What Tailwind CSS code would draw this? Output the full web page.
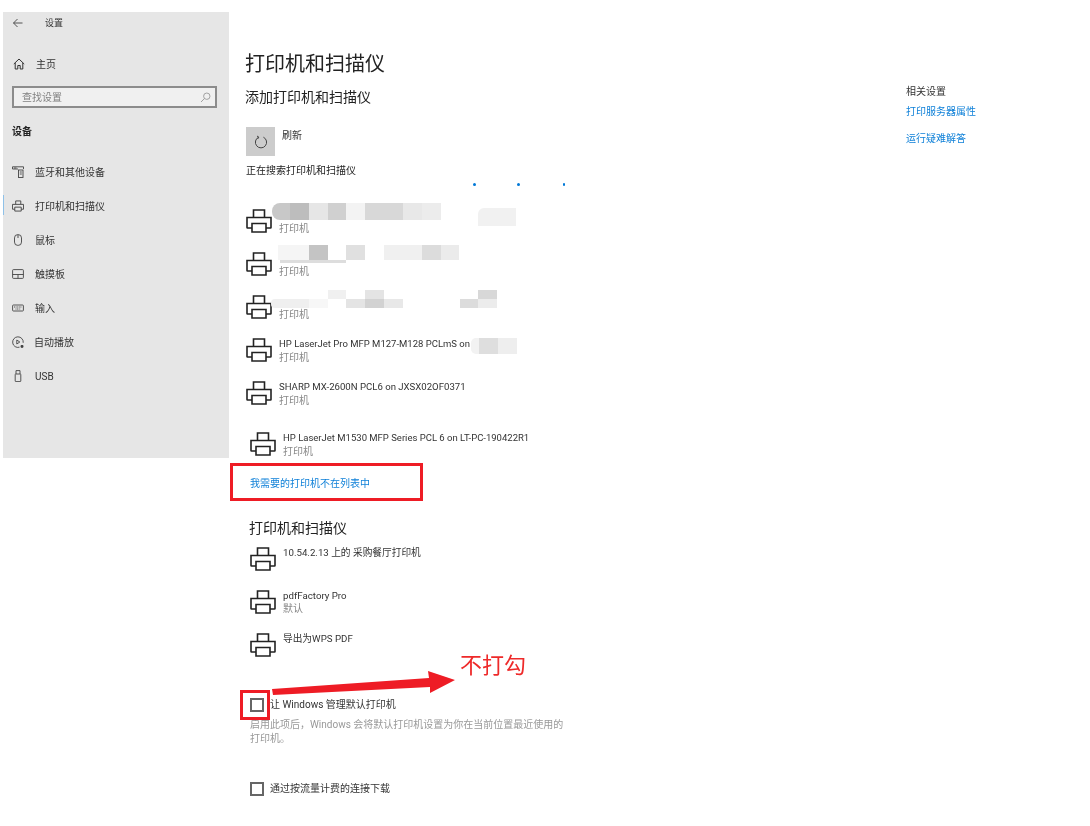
<!DOCTYPE html>
<html lang="zh-CN">
<head>
  <meta charset="UTF-8" />
  <title>打印机和扫描仪</title>
  <script src="https://cdn.jsdelivr.net/npm/@tailwindcss/browser@4"></script>
</head>
<body class="bg-white">
<div class="relative w-[1090px] h-[826px] overflow-hidden flex items-start bg-white text-[10px] leading-[14px] text-[#333] blur-[0.45px] [font-family:'Roboto','Noto_Sans_CJK_SC',sans-serif]">

  <!-- sidebar -->
  <aside class="relative ml-[3px] mt-[12px] w-[226px] h-[446px] shrink-0 bg-[#e6e6e6]">
    <div class="h-[22px] flex items-center">
      <svg class="ml-[10px] w-[10px] h-[10px]" viewBox="0 0 10 10" fill="none" stroke="#444" stroke-width="0.9"><path d="M0.5 5H9.5M4.5 1L0.5 5L4.5 9"/></svg>
      <span class="ml-[22px] text-[9px]">设置</span>
    </div>
    <div class="mt-[20px] h-[20px] flex items-center">
      <svg class="ml-[10px] w-[12px] h-[12px]" viewBox="0 0 12 12" fill="none" stroke="#333" stroke-width="1"><path d="M0.8 6L6 1L11.2 6M2.2 5V11H4.8V7.5H7.2V11H9.8V5"/></svg>
      <span class="ml-[11px] mt-[2px]">主页</span>
    </div>
    <div class="mt-[12px] ml-[9px] w-[205px] h-[22px] border-2 border-[#8c8c8c] bg-[#f0f0f0] flex items-center justify-between pl-[8px] pr-[4px] text-[#808080]">
      <span class="mt-[2px]">查找设置</span>
      <svg class="w-[11px] h-[11px]" viewBox="0 0 11 11" fill="none" stroke="#999" stroke-width="0.9"><circle cx="6.8" cy="4.2" r="3.2"/><path d="M4.5 6.5L1 10"/></svg>
    </div>
    <div class="mt-[17px] ml-[9px] font-bold text-[#222]">设备</div>
    <nav class="mt-[16px]">
      <div class="h-[34px] flex items-center">
        <svg class="ml-[9px] w-[12px] h-[12px]" viewBox="0 0 12 12" fill="none" stroke="#444" stroke-width="0.9"><path d="M6 3H0.5V0.8H11.5V3M2 2H4.5"/><rect x="6.5" y="4" width="4.5" height="7.5"/><path d="M7.8 6H9.8M7.8 8H9.8"/></svg>
        <span class="ml-[11px] mt-[2px]">蓝牙和其他设备</span>
      </div>
      <div class="relative h-[34px] flex items-center">
        <span class="absolute left-0 top-[6px] w-[1px] h-[20px] bg-[#8fc1e8]"></span>
        <svg class="ml-[9px] w-[12px] h-[12px]" viewBox="0 0 26 24" fill="none" stroke="#444" stroke-width="2"><path d="M8 8V1H19V8M6 19H1V8.5H25V19H20M6 14.5H20V23H6Z"/></svg>
        <span class="ml-[11px] mt-[2px]">打印机和扫描仪</span>
      </div>
      <div class="h-[34px] flex items-center">
        <svg class="ml-[9px] w-[12px] h-[12px]" viewBox="0 0 12 12" fill="none" stroke="#444" stroke-width="0.9"><rect x="2.5" y="0.6" width="7" height="10.8" rx="3.3"/><path d="M6 0.8V4"/></svg>
        <span class="ml-[11px] mt-[2px]">鼠标</span>
      </div>
      <div class="h-[34px] flex items-center">
        <svg class="ml-[9px] w-[12px] h-[12px]" viewBox="0 0 12 12" fill="none" stroke="#444" stroke-width="0.9"><rect x="0.6" y="1.6" width="10.8" height="8.8" rx="0.8"/><path d="M0.6 6.5H11.4M6 6.5V10.4"/></svg>
        <span class="ml-[11px] mt-[2px]">触摸板</span>
      </div>
      <div class="h-[34px] flex items-center">
        <svg class="ml-[9px] w-[12px] h-[12px]" viewBox="0 0 12 12" fill="none" stroke="#444" stroke-width="0.9"><rect x="0.6" y="3" width="10.8" height="6" rx="0.8"/><path d="M2 5H10M3.5 7H8.5" stroke-dasharray="1 0.6"/></svg>
        <span class="ml-[11px] mt-[2px]">输入</span>
      </div>
      <div class="h-[34px] flex items-center">
        <svg class="ml-[9px] w-[12px] h-[12px]" viewBox="0 0 12 12" fill="none" stroke="#444" stroke-width="0.9"><path d="M7.5 11.2A5.3 5.3 0 1 1 11.2 6.8"/><path d="M4.8 4V8L7.8 6Z"/><path d="M9 9.5H11V11.3H9Z" fill="#444"/></svg>
        <span class="ml-[10px] mt-[2px]">自动播放</span>
      </div>
      <div class="h-[34px] flex items-center">
        <svg class="ml-[9px] w-[12px] h-[12px]" viewBox="0 0 12 12" fill="none" stroke="#444" stroke-width="0.9"><rect x="3.2" y="4" width="5.6" height="7.6" rx="0.6"/><path d="M4 4V0.6H8V4"/></svg>
        <span class="ml-[11px] mt-[2px]">USB</span>
      </div>
    </nav>
  </aside>

  <!-- main column -->
  <main class="ml-[17px] w-[660px] shrink-0 pt-[50px]">
    <h1 class="-ml-[1px] text-[20px] leading-[28px] text-[#222]">打印机和扫描仪</h1>
    <h2 class="-ml-[1px] mt-[9px] text-[14px] leading-[20px] text-[#222]">添加打印机和扫描仪</h2>
    <div class="mt-[20px] flex items-start">
      <div class="w-[29px] h-[29px] bg-[#cccccc] flex items-center justify-center">
        <svg class="w-[14px] h-[14px]" viewBox="0 0 14 14" fill="none" stroke="#444" stroke-width="1"><path d="M4.6 2.2A5.6 5.6 0 1 0 9.4 2.2M3 1L4.8 2.2L3.6 4"/></svg>
      </div>
      <span class="ml-[7px] mt-[2px]">刷新</span>
    </div>
    <p class="mt-[8px] text-[#222]">正在搜索打印机和扫描仪</p>
    <div class="mt-[5px] h-[3px] pl-[227px] flex items-center">
      <span class="w-[3px] h-[3px] rounded-full bg-[#0078d7]"></span>
      <span class="ml-[41px] w-[3px] h-[3px] rounded-full bg-[#0078d7]"></span>
      <span class="ml-[43px] w-[2px] h-[3px] rounded-full bg-[#0078d7]"></span>
    </div>

    <!-- found printers -->
    <div class="mt-[22px]">
      <div class="h-[43px] flex items-start">
        <svg class="mt-[1px] w-[26px] h-[24px] shrink-0" viewBox="0 0 26 24" fill="none" stroke="#222" stroke-width="1.6"><path d="M7.5 8V1H18.5V8M6 19H1.5Q1 19 1 18.5V8.5H25V18.5Q25 19 24.5 19H20M6 14.5H20V23H6Z"/></svg>
        <div class="relative ml-[7px]">
          <div class="h-[14px]"></div>
          <div class="text-[#888]">打印机</div>
          <!-- mosaic over the hidden name -->
          <div class="absolute left-[-7px] top-[-5px] flex">
            <div class="w-[18px] h-[17px] bg-[#c8c8c8] rounded-l-[8px]"></div>
            <div class="w-[19px] h-[17px] bg-[#bdbdbd]"></div>
            <div class="w-[19px] h-[17px] bg-[#e6e6e6]"></div>
            <div class="w-[18px] h-[17px] bg-[#d0d0d0]"></div>
            <div class="w-[19px] h-[17px] bg-[#f3f3f3]"></div>
            <div class="w-[38px] h-[17px] bg-[#d8d8d8]"></div>
            <div class="w-[19px] h-[17px] bg-[#e8e8e8]"></div>
            <div class="w-[19px] h-[17px] bg-[#ececec]"></div>
            <div class="ml-[37px] w-[38px] h-[18px] bg-[#f1f1f1] mt-[5px] rounded-tl-[6px]"></div>
          </div>
        </div>
      </div>
      <div class="h-[43px] flex items-start">
        <svg class="mt-[1px] w-[26px] h-[24px] shrink-0" viewBox="0 0 26 24" fill="none" stroke="#222" stroke-width="1.6"><path d="M7.5 8V1H18.5V8M6 19H1.5Q1 19 1 18.5V8.5H25V18.5Q25 19 24.5 19H20M6 14.5H20V23H6Z"/></svg>
        <div class="relative ml-[7px]">
          <div class="h-[14px]"></div>
          <div class="text-[#888]">打印机</div>
          <div class="absolute left-[-1px] top-[-6px] flex">
            <div class="w-[31px] h-[15px] bg-[#f5f5f5]"></div>
            <div class="w-[19px] h-[15px] bg-[#c4c4c4]"></div>
            <div class="w-[18px] h-[15px] bg-white"></div>
            <div class="w-[19px] h-[15px] bg-[#e0e0e0]"></div>
            <div class="w-[19px] h-[15px] bg-white"></div>
            <div class="w-[38px] h-[15px] bg-[#f0f0f0]"></div>
            <div class="w-[19px] h-[15px] bg-[#dcdcdc]"></div>
            <div class="w-[18px] h-[15px] bg-[#ebebeb]"></div>
          </div>
          <div class="absolute left-[1px] top-[9px] w-[66px] h-[3px] bg-[#dddddd]"></div>
        </div>
      </div>
      <div class="h-[43px] flex items-start">
        <svg class="mt-[1px] w-[26px] h-[24px] shrink-0" viewBox="0 0 26 24" fill="none" stroke="#222" stroke-width="1.6"><path d="M7.5 8V1H18.5V8M6 19H1.5Q1 19 1 18.5V8.5H25V18.5Q25 19 24.5 19H20M6 14.5H20V23H6Z"/></svg>
        <div class="relative ml-[7px]">
          <div class="h-[14px]"></div>
          <div class="text-[#888]">打印机</div>
          <div class="absolute left-[49px] top-[-4px] flex">
            <div class="w-[18px] h-[9px] bg-[#f0f0f0]"></div>
            <div class="ml-[19px] w-[19px] h-[9px] bg-[#e4e4e4]"></div>
            <div class="ml-[94px] w-[19px] h-[9px] bg-[#d8d8d8]"></div>
          </div>
          <div class="absolute left-[-8px] top-[5px] flex">
            <div class="w-[38px] h-[9px] bg-[#efefef] rounded-l-[4px]"></div>
            <div class="w-[19px] h-[9px] bg-[#f7f7f7]"></div>
            <div class="ml-[18px] w-[19px] h-[9px] bg-[#e4e4e4]"></div>
            <div class="w-[19px] h-[9px] bg-[#d2d2d2]"></div>
            <div class="w-[19px] h-[9px] bg-[#e8e8e8]"></div>
            <div class="ml-[57px] w-[18px] h-[9px] bg-[#dcdcdc]"></div>
            <div class="w-[19px] h-[9px] bg-[#ececec]"></div>
          </div>
        </div>
      </div>
      <div class="h-[43px] flex items-start">
        <svg class="mt-[1px] w-[26px] h-[24px] shrink-0" viewBox="0 0 26 24" fill="none" stroke="#222" stroke-width="1.6"><path d="M7.5 8V1H18.5V8M6 19H1.5Q1 19 1 18.5V8.5H25V18.5Q25 19 24.5 19H20M6 14.5H20V23H6Z"/></svg>
        <div class="ml-[7px]">
          <div class="flex h-[14px]">
            <span class="text-[9.5px]">HP LaserJet Pro MFP M127-M128 PCLmS on</span>
            <div class="flex h-[16px] mt-[1px] ml-[1px]">
              <div class="w-[8px] bg-[#f2f2f2] rounded-l-[5px]"></div>
              <div class="w-[19px] bg-[#dedede]"></div>
              <div class="w-[19px] bg-[#eeeeee]"></div>
            </div>
          </div>
          <div class="text-[#888]">打印机</div>
        </div>
      </div>
      <div class="h-[43px] flex items-start">
        <svg class="mt-[1px] w-[26px] h-[24px] shrink-0" viewBox="0 0 26 24" fill="none" stroke="#222" stroke-width="1.6"><path d="M7.5 8V1H18.5V8M6 19H1.5Q1 19 1 18.5V8.5H25V18.5Q25 19 24.5 19H20M6 14.5H20V23H6Z"/></svg>
        <div class="ml-[7px]">
          <div class="h-[14px] text-[9.6px]">SHARP MX-2600N PCL6 on JXSX02OF0371</div>
          <div class="text-[#888]">打印机</div>
        </div>
      </div>
    </div>

    <div class="pl-[4px]">
      <div class="mt-[8px] h-[43px] flex items-start">
        <svg class="mt-[1px] w-[26px] h-[24px] shrink-0" viewBox="0 0 26 24" fill="none" stroke="#222" stroke-width="1.6"><path d="M7.5 8V1H18.5V8M6 19H1.5Q1 19 1 18.5V8.5H25V18.5Q25 19 24.5 19H20M6 14.5H20V23H6Z"/></svg>
        <div class="ml-[7px]">
          <div class="text-[9.5px]">HP LaserJet M1530 MFP Series PCL 6 on LT-PC-190422R1</div>
          <div class="text-[#888]">打印机</div>
        </div>
      </div>
      <a class="block mt-[3px] text-[#0f80d8]">我需要的打印机不在列表中</a>

      <h2 class="-ml-[1px] mt-[27px] text-[14px] leading-[20px] text-[#222]">打印机和扫描仪</h2>
      <div class="mt-[8px]">
        <div class="h-[43px] flex items-start">
          <svg class="mt-[1px] w-[26px] h-[24px] shrink-0" viewBox="0 0 26 24" fill="none" stroke="#222" stroke-width="1.6"><path d="M7.5 8V1H18.5V8M6 19H1.5Q1 19 1 18.5V8.5H25V18.5Q25 19 24.5 19H20M6 14.5H20V23H6Z"/></svg>
          <div class="ml-[7px] text-[9.7px]">10.54.2.13 上的 采购餐厅打印机</div>
        </div>
        <div class="h-[43px] flex items-start">
          <svg class="mt-[1px] w-[26px] h-[24px] shrink-0" viewBox="0 0 26 24" fill="none" stroke="#222" stroke-width="1.6"><path d="M7.5 8V1H18.5V8M6 19H1.5Q1 19 1 18.5V8.5H25V18.5Q25 19 24.5 19H20M6 14.5H20V23H6Z"/></svg>
          <div class="ml-[7px]">
            <div class="h-[13px] text-[9.7px]">pdfFactory Pro</div>
            <div class="text-[#888]">默认</div>
          </div>
        </div>
        <div class="h-[43px] flex items-start">
          <svg class="mt-[1px] w-[26px] h-[24px] shrink-0" viewBox="0 0 26 24" fill="none" stroke="#222" stroke-width="1.6"><path d="M7.5 8V1H18.5V8M6 19H1.5Q1 19 1 18.5V8.5H25V18.5Q25 19 24.5 19H20M6 14.5H20V23H6Z"/></svg>
          <div class="ml-[7px] text-[9.7px]">导出为WPS PDF</div>
        </div>
      </div>

      <label class="mt-[23px] flex items-center h-[14px]">
        <span class="w-[14px] h-[14px] border-2 border-[#666] shrink-0"></span>
        <span class="ml-[6px]">让 Windows 管理默认打印机</span>
      </label>
      <p class="mt-[6px] w-[316px] text-[#999]">启用此项后，Windows 会将默认打印机设置为你在当前位置最近使用的打印机。</p>
      <label class="mt-[36px] flex items-center h-[14px]">
        <span class="w-[14px] h-[14px] border-2 border-[#666] shrink-0"></span>
        <span class="ml-[6px]">通过按流量计费的连接下载</span>
      </label>
    </div>
  </main>

  <!-- related settings -->
  <section class="pt-[85px]">
    <div>相关设置</div>
    <a class="block mt-[6px] text-[#0f80d8]">打印服务器属性</a>
    <a class="block mt-[13px] text-[#0f80d8]">运行疑难解答</a>
  </section>

  <!-- red annotations on top of the screenshot -->
  <div class="absolute left-[230px] top-[463px] w-[193px] h-[38px] border-[3px] border-[#ee1c25]"></div>
  <div class="absolute left-[240px] top-[690px] w-[30px] h-[30px] border-[3px] border-[#ee1c25]"></div>
  <svg class="absolute left-[270px] top-[668px] w-[190px] h-[30px]" viewBox="0 0 190 30" fill="#ee1c25"><path d="M2 21L159 10L158 3L185 12L160 25L160 19L3 27Z"/></svg>
  <div class="absolute left-[460px] top-[650px] text-[22px] leading-[32px] text-[#ee2a2a]">不打勾</div>
</div>
</body>
</html>
